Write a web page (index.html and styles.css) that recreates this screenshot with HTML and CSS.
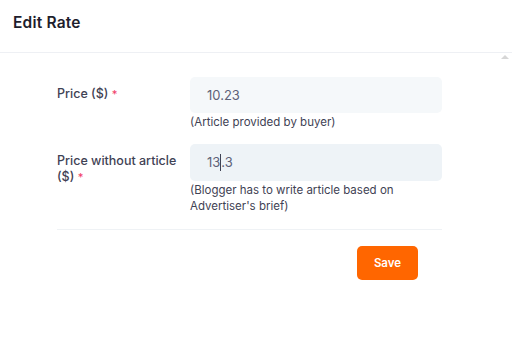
FILE: index.html
```html
<!DOCTYPE html>
<html>
	<head>
		<meta charset="utf-8" />
		<title>Edit Rate</title>
		<link rel="stylesheet" href="styles.css">
	</head>
	<body>
		<div class="modal">
			<div class="modal-header">
				<h2>Edit Rate</h2>
			</div>
			<span class="scroll-up"></span>
			<div class="modal-body">
				<div class="row">
					<label class="label">Price ($) <span class="req">*</span></label>
					<div class="field">
						<div class="input">10.23</div>
						<div class="help">(Article provided by buyer)</div>
					</div>
				</div>
				<div class="row">
					<label class="label">Price without article ($) <span class="req">*</span></label>
					<div class="field">
						<div class="input focus">13<span class="caret"></span>.3</div>
						<div class="help">(Blogger has to write article based on Advertiser's brief)</div>
					</div>
				</div>
				<div class="actions">
					<button class="btn">Save</button>
				</div>
			</div>
		</div>
	</body>
</html>
```

FILE: styles.css
```css
*{margin: 0;padding: 0;box-sizing: border-box;}
body{
	background: #fff;
	font-family: Inter, "Noto Sans", sans-serif;
	color: #3f4254;
}
.modal{
	position: relative;
	width: 512px;
	height: 353px;
}
.modal-header{
	height: 53px;
	padding: 14px 13px 0;
	border-bottom: 1px solid #eef0f4;
}
.modal-header h2{
	font-size: 15.5px;
	font-weight: 600;
	color: #1e1e2d;
	line-height: 18px;
	letter-spacing: 0.2px;
}
.scroll-up{
	position: absolute;
	right: 3px;
	top: 55px;
	width: 0;
	height: 0;
	border-left: 4px solid transparent;
	border-right: 4px solid transparent;
	border-bottom: 4px solid #d6d6d6;
}
.modal-body{
	width: 385px;
	margin-left: 57px;
	padding-top: 24px;
}
.row{
	display: flex;
	margin-bottom: 14px;
}
.label{
	width: 133px;
	flex-shrink: 0;
	padding: 9px 4px 0 0;
	font-size: 12.5px;
	font-weight: 500;
	line-height: 16px;
	color: #3f4254;
}
.req{
	color: #f1416c;
	font-size: 11px;
}
.field{
	flex: 1;
}
.input{
	height: 36px;
	padding: 0 17px;
	border-radius: 5px;
	background: #f5f8fa;
	font-size: 13px;
	line-height: 36px;
	color: #5e6278;
}
.input.focus{
	height: 37px;
	background: #eef3f7;
}
.caret{
	display: inline-block;
	width: 1px;
	height: 17px;
	background: #3f4254;
	vertical-align: -4px;
}
.help{
	margin-top: 1px;
	font-size: 11.5px;
	line-height: 16px;
	color: #3f4254;
	padding-right: 42px;
}
.actions{
	border-top: 1px solid #eff2f5;
	margin-top: 15px;
	padding-top: 16px;
	display: flex;
	justify-content: flex-end;
	padding-right: 24px;
}
.btn{
	width: 61px;
	height: 34px;
	border: none;
	border-radius: 5px;
	background: #ff6600;
	color: #fff;
	font-family: Inter, "Noto Sans", sans-serif;
	font-size: 11.5px;
	font-weight: 600;
}
```
